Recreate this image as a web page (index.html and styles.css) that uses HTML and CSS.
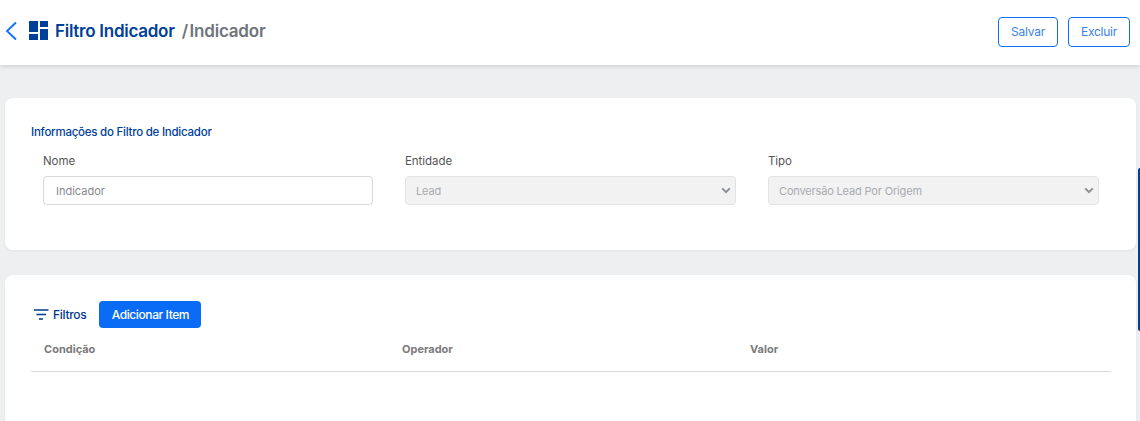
FILE: index.html
```html
<!DOCTYPE html>
<html lang="pt-BR">
<head>
<meta charset="utf-8">
<title>Filtro Indicador</title>
<link rel="stylesheet" href="styles.css">
</head>
<body>
<header class="topbar">
  <div class="crumbs">
    <svg class="back" width="12" height="20" viewBox="0 0 12 20"><path d="M11 1.500 2 10l9 8.500" fill="none" stroke="#0d6efd" stroke-width="1.800"/></svg>
    <svg class="logo" width="19" height="19" viewBox="0 0 19 19"><path d="M0 0h9v11H0zM11 0h8v6h-8zM11 8h8v11h-8zM0 13h9v6H0z" fill="#004098"/></svg>
    <span class="title">Filtro Indicador</span>
    <span class="subtitle">/ Indicador</span>
  </div>
  <div class="actions">
    <button class="btn-outline btn-save">Salvar</button>
    <button class="btn-outline btn-del">Excluir</button>
  </div>
</header>
<main class="content">
  <section class="card card-info">
    <h2 class="card-title">Informações do Filtro de Indicador</h2>
    <div class="fields">
      <div class="field">
        <label class="label">Nome</label>
        <div class="control">Indicador</div>
      </div>
      <div class="field">
        <label class="label">Entidade</label>
        <div class="control disabled">Lead
          <svg class="chev" width="10" height="7" viewBox="0 0 12 8"><path d="M1.500 1.500 6 6l4.500-4.500" fill="none" stroke="#8a8f96" stroke-width="2.400"/></svg>
        </div>
      </div>
      <div class="field">
        <label class="label">Tipo</label>
        <div class="control disabled">Conversão Lead Por Origem
          <svg class="chev" width="10" height="7" viewBox="0 0 12 8"><path d="M1.500 1.500 6 6l4.500-4.500" fill="none" stroke="#8a8f96" stroke-width="2.400"/></svg>
        </div>
      </div>
    </div>
  </section>
  <section class="card card-filters">
    <div class="filter-bar">
      <svg class="filter-icon" width="16" height="11" viewBox="0 0 16 11"><path d="M1 1h14.500M3.500 5.500h9.500M6 10h4" stroke="#003a8c" stroke-width="1.600" fill="none"/></svg>
      <span class="filter-label">Filtros</span>
      <button class="btn-primary">Adicionar Item</button>
    </div>
    <div class="table-head">
      <span class="col">Condição</span>
      <span class="col">Operador</span>
      <span class="col">Valor</span>
    </div>
  </section>
</main>
<div class="side-tab"></div>
</body>
</html>
```
FILE: styles.css
```css
* { box-sizing: border-box; }
html, body { height: 100%; }
body {
  margin: 0;
  height: 421px;
  overflow: hidden;
  background: #eeeff1;
  font-family: "Inter", "Liberation Sans", sans-serif;
  position: relative;
}
.topbar {
  height: 65px;
  background: #fff;
  box-shadow: 0 1px 5px rgba(0,0,0,.16);
  display: flex;
  align-items: center;
  justify-content: space-between;
  padding: 0 10px 4px 5px;
}
.crumbs { display: flex; align-items: center; }
.back { margin-right: 12px; }
.logo { margin-right: 7px; }
.title { font-size: 17px; font-weight: 600; color: #004098; letter-spacing: -.26px; }
.subtitle { font-size: 17px; font-weight: 600; color: #6f747b; margin-left: 7px; letter-spacing: -.2px; word-spacing: -2.500px; }
.actions { display: flex; gap: 10px; margin-top: 2px; }
.btn-outline {
  height: 30px;
  border: 1px solid #0d6efd;
  border-radius: 4px;
  background: #fff;
  color: #3b82e6;
  font: 400 12px "Inter", sans-serif;
  letter-spacing: -.25px;
  padding: 0;
}
.btn-save { width: 60px; }
.btn-del { width: 62px; }
.content {
  padding: 33px 4px 0 5px;
  display: flex;
  flex-direction: column;
  gap: 25px;
}
.card { background: #fff; border-radius: 8px; box-shadow: 0 1px 3px rgba(0,0,0,.05); }
.card-info { height: 152px; padding: 27px 37px 0 26px; }
.card-title { margin: 0; font-size: 11.500px; font-weight: 500; line-height: 14px; color: #004098; letter-spacing: -.24px; }
.fields { display: grid; grid-template-columns: 330px 331px 331px; column-gap: 32px; margin: 15px 0 0 12px; }
.field { display: flex; flex-direction: column; }
.label { font-size: 11.500px; line-height: 14px; color: #555; margin-bottom: 8px; letter-spacing: -.05px; }
.control {
  height: 29px;
  border: 1px solid #d5d7da;
  border-radius: 4px;
  background: #fff;
  color: #85898e;
  font-size: 11px;
  padding: 0 12px;
  display: flex;
  align-items: center;
  justify-content: space-between;
}
.control.disabled { background: #f2f2f2; border-color: #e3e3e3; color: #a8abaf; padding: 0 4px 0 10px; letter-spacing: -.16px; }
.card-filters { height: 160px; padding: 26px 25px 0 26px; }
.filter-bar { display: flex; align-items: center; height: 26px; }
.filter-icon { margin: 0 4px 0 2px; }
.filter-label { font-size: 12px; font-weight: 500; color: #003a8c; letter-spacing: -.3px; margin-right: 13px; }
.btn-primary {
  width: 102px;
  height: 27px;
  border: 0;
  border-radius: 4px;
  background: #0a6cf5;
  color: #fff;
  font: 500 12px "Inter", sans-serif;
  letter-spacing: -.4px;
  padding: 0;
}
.table-head {
  display: grid;
  grid-template-columns: 358px 348px 1fr;
  height: 45px;
  padding: 15px 0 0 13px;
  border-bottom: 1px solid #d8d8d8;
  font-size: 11px;
  font-weight: 700;
  color: #7b7b7b;
  line-height: 14px;
}
.side-tab {
  position: absolute;
  right: 0;
  top: 168px;
  width: 2px;
  height: 163px;
  background: #004098;
  border-radius: 2px 0 0 2px;
}
```
